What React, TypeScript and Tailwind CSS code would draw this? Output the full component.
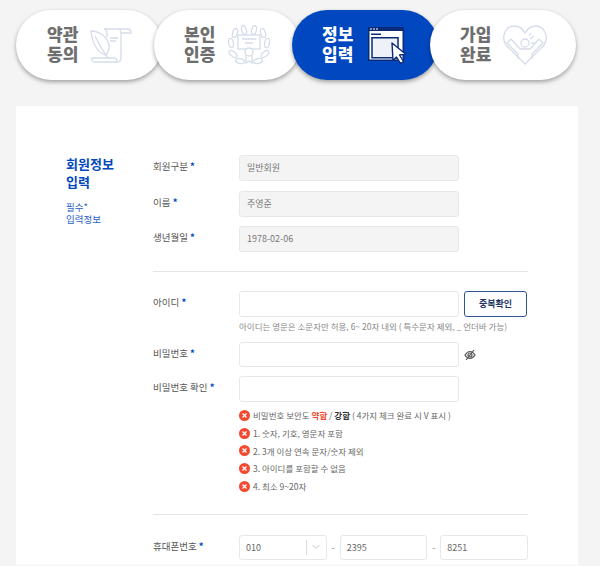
import React from "react";
import { ChevronDown } from "lucide-react";

const inputBox = "h-[26px] w-[220px] rounded-[3px] border border-[#e8e8e8] bg-white";

const ScrollIcon = () => (
  <svg width="44" height="38" viewBox="0 0 44 38" fill="none" stroke="#d5dcea" strokeWidth="1.3" className="shrink-0">
    <path d="M14 3H38C40 3 41 5 41 7H31C31 5 30 3 28 3" />
    <path d="M31 7V32C31 35 30 36 27 36H5C2 36 1 34 2 32H24C26 32 27 34 27 36" />
    <path d="M14 3C16 3 17 5 17 8V11" />
    <path d="M1 5C8 5 18 10 19 20C19 24 18 27 16 29C9 28 2 18 1 5Z" />
    <path d="M5 10C8 16 12 24 16 29L18 32" />
    <path d="M20 12H28M20 15H26" />
  </svg>
);

const leaves = [
  { x: 8, y: 8, r: 15 },
  { x: 17, y: 5, r: -15 },
  { x: 4, y: 18, r: -10 },
  { x: 6, y: 29, r: -50 },
  { x: 13, y: 36, r: -75 },
];

const Branch = () => (
  <>
    {leaves.map((leaf) => (
      <ellipse
        key={leaf.x + leaf.y}
        cx={leaf.x}
        cy={leaf.y}
        rx="2.4"
        ry="4.6"
        transform={`rotate(${leaf.r} ${leaf.x} ${leaf.y})`}
      />
    ))}
  </>
);

const DiplomaIcon = () => (
  <svg width="44" height="40" viewBox="0 0 44 40" fill="none" stroke="#d5dcea" strokeWidth="1.3" className="shrink-0">
    <rect x="11" y="10" width="22" height="14" />
    <path d="M15 14H29M18 18H26" />
    <circle cx="22" cy="27" r="4" fill="#fff" />
    <path d="M19 30V38L22 36L25 38V30" />
    <Branch />
    <g transform="translate(44 0) scale(-1 1)">
      <Branch />
    </g>
  </svg>
);

const WindowIcon = () => (
  <svg width="38" height="38" viewBox="0 0 38 38" className="ml-[3px] shrink-0">
    <rect x="0.75" y="1.75" width="34.5" height="32.5" fill="#fff" stroke="#0b2a78" strokeWidth="1.5" />
    <rect x="0" y="1" width="36" height="4" fill="#0b2a78" />
    <path d="M2 2.500h2v1H2zM5 2.500h2v1H5zM8 2.500h2v1H8z" fill="#fff" />
    <rect x="3" y="7.500" width="10" height="1.500" fill="#0b2a78" />
    <rect x="4" y="11.750" width="26" height="20" fill="#eef1f8" stroke="#0b2a78" strokeWidth="1.5" />
    <path d="M24 17L37.500 28L31.500 29L35.500 35.500L32.500 37.500L28.500 31L25 34.500Z" fill="#fff" stroke="#0b2a78" strokeWidth="1.4" strokeLinejoin="round" />
  </svg>
);

const HeartIcon = () => (
  <svg width="46" height="40" viewBox="0 0 46 40" fill="none" stroke="#d5dcea" strokeWidth="1.3" className="ml-[-1px] shrink-0">
    <path d="M23 39L4 20C-1 13 3 1 12 1C17 1 21 4 23 8C25 4 29 1 34 1C43 1 47 13 42 20Z" />
    <circle cx="23" cy="18" r="4" />
    <path d="M9 14L5 18L16 29V34M37 14L41 18L30 29V34M9 14L18 24H28L37 14" />
    <path d="M28 14L32 11M29 18H32M27 11L29 8" />
  </svg>
);

const Step = ({
  lines,
  active,
  first,
  icon,
}: {
  lines: string[];
  active?: boolean;
  first?: boolean;
  icon: React.ReactNode;
}) => (
  <div
    className={`flex h-[70px] w-[146px] shrink-0 items-center gap-[12px] rounded-[35px] shadow-[0_2px_4px_rgba(0,0,0,0.35)] ${
      first ? "pl-[31px]" : "pl-[30px]"
    } ${active ? "bg-[#0047c0]" : "bg-white"}`}
  >
    <div className={`mt-[-2px] shrink-0 text-[17px] font-black leading-[20px] ${active ? "text-white" : "text-[#6e6e6e]"}`}>
      {lines.map((line) => (
        <div key={line}>{line}</div>
      ))}
    </div>
    {icon}
  </div>
);

const Label = ({ text }: { text: string }) => (
  <div className="w-[86px] shrink-0 pt-[3px] text-[9.5px] leading-[16px] text-[#555]">
    {text} <span className="font-bold text-[#0047c0]">*</span>
  </div>
);

const ReadOnly = ({ label, value }: { label: string; value: string }) => (
  <div className="flex h-[26px]">
    <Label text={label} />
    <div className="flex h-[26px] w-[220px] items-center rounded-[3px] border border-[#e8e8e8] bg-[#f4f4f4] pl-[7px] text-[9px] text-[#777]">
      {value}
    </div>
  </div>
);

const Fail = ({ children }: { children: React.ReactNode }) => (
  <div className="flex h-[17.6px] items-center gap-[3px] text-[8.5px] text-[#666]">
    <svg width="11" height="11" viewBox="0 0 11 11" className="shrink-0">
      <circle cx="5.5" cy="5.5" r="5.5" fill="#f4492f" />
      <path d="M3.5 3.5l4 4M7.500 3.5l-4 4" stroke="#fff" strokeWidth="1.3" />
    </svg>
    <span>{children}</span>
  </div>
);

const NumberBox = ({ value }: { value: string }) => (
  <div className="flex h-[25px] flex-1 items-center rounded-[3px] border border-[#e8e8e8] pl-[6px] text-[9px] text-[#666]">
    {value}
  </div>
);

export default function App() {
  return (
    <div
      className="h-[566px] w-[600px] overflow-hidden bg-[#f4f4f4] pl-[16px] pt-[10px]"
      style={{ fontFamily: '"Noto Sans CJK KR", "Noto Sans", sans-serif' }}
    >
      <div className="flex [&>*+*]:ml-[-8px]">
        <Step lines={["약관", "동의"]} first icon={<ScrollIcon />} />
        <Step lines={["본인", "인증"]} icon={<DiplomaIcon />} />
        <Step lines={["정보", "입력"]} active icon={<WindowIcon />} />
        <Step lines={["가입", "완료"]} icon={<HeartIcon />} />
      </div>

      <div className="mt-[26px] flex h-[459px] w-[562px] bg-white pl-[50px] pt-[49px]">
        <div className="w-[87px] shrink-0">
          <div className="text-[13px] font-bold leading-[18px] text-[#0047c0]">
            회원정보
            <br />
            입력
          </div>
          <div className="mt-[10px] text-[9.5px] leading-[12px] text-[#2a5fc8]">
            필수*
            <br />
            입력정보
          </div>
        </div>

        <div className="w-[375px]">
          <div className="flex flex-col gap-[9.5px]">
            <ReadOnly label="회원구분" value="일반회원" />
            <ReadOnly label="이름" value="주영준" />
            <ReadOnly label="생년월일" value="1978-02-06" />
          </div>

          <div className="mt-[19px] border-t border-[#e5e5e5]" />

          <div className="mt-[19px] flex h-[26px]">
            <Label text="아이디" />
            <div className={inputBox} />
            <button className="ml-[5px] h-[26px] w-[63px] rounded-[3px] border border-[#2f5597] bg-white text-[9px] font-bold text-[#1f3864]">
              중복확인
            </button>
          </div>
          <div className="ml-[86px] mt-[2px] whitespace-nowrap text-[8.5px] leading-[14px] text-[#888]">
            아이디는 영문은 소문자만 허용, 6~ 20자 내외 ( 특수문자 제외, _ 언더바 가능)
          </div>

          <div className="mt-[9px] flex h-[25px]">
            <Label text="비밀번호" />
            <div className="h-[25px] w-[220px] rounded-[3px] border border-[#e8e8e8] bg-white" />
            <svg width="12" height="12" viewBox="0 0 12 12" fill="none" stroke="#555" strokeWidth="1.2" className="ml-[5px] mt-[7px]">
              <path d="M1 6c1.500-2.500 3-3.500 5-3.500S9.500 3.500 11 6c-1.500 2.500-3 3.500-5 3.500S2.500 8.500 1 6Z" />
              <circle cx="6" cy="6" r="2" />
              <path d="M2 11 10 1" />
            </svg>
          </div>

          <div className="mt-[9px] flex h-[26px]">
            <Label text="비밀번호 확인" />
            <div className={inputBox} />
          </div>

          <div className="ml-[86px] mt-[5px]">
            <Fail>
              비밀번호 보안도 <b className="text-[#f4492f]">약함</b> / <b className="text-[#333]">강함</b> ( 4가지 체크 완료 시 V 표시 )
            </Fail>
            <Fail>1. 숫자, 기호, 영문자 포함</Fail>
            <Fail>2. 3개 이상 연속 문자/숫자 제외</Fail>
            <Fail>3. 아이디를 포함할 수 없음</Fail>
            <Fail>4. 최소 9~20자</Fail>
          </div>

          <div className="mt-[19px] border-t border-[#e5e5e5]" />

          <div className="mt-[20px] flex h-[25px] items-start">
            <Label text="휴대폰번호" />
            <div className="flex w-[289px] items-center">
              <div className="flex h-[25px] flex-1 items-center rounded-[3px] border border-[#e8e8e8] pl-[6px] text-[9px] text-[#666]">
                <span className="flex-1">010</span>
                <span className="flex h-[15px] w-[20px] items-center justify-center border-l border-[#ddd]">
                  <ChevronDown size={12} strokeWidth={1} color="#888" />
                </span>
              </div>
              <span className="w-[13px] text-center text-[9px] text-[#888]">-</span>
              <NumberBox value="2395" />
              <span className="w-[13px] text-center text-[9px] text-[#888]">-</span>
              <NumberBox value="8251" />
            </div>
          </div>
        </div>
      </div>
    </div>
  );
}
